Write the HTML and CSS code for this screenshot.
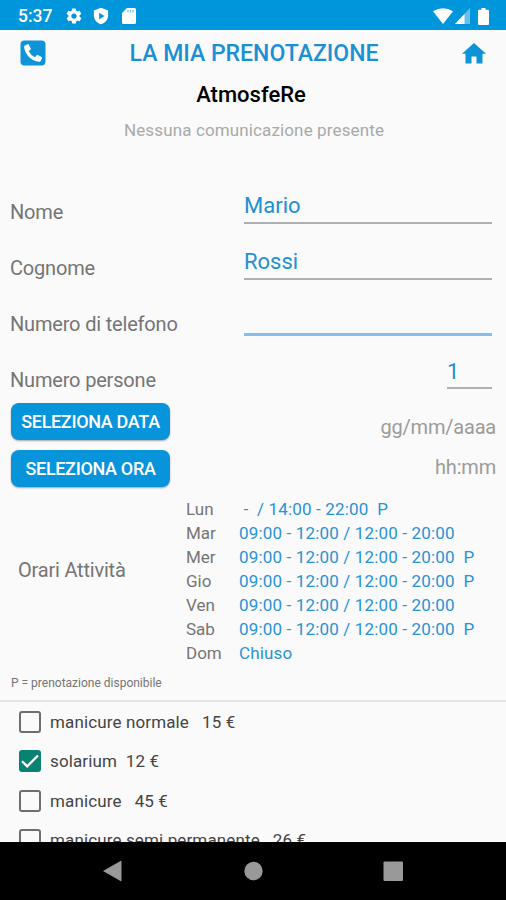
FILE: index.html
```html
<!DOCTYPE html>
<html lang="it">
<head>
    <meta charset="UTF-8">
    <meta name="viewport" content="width=device-width, initial-scale=1.0">
    <title>La mia prenotazione</title>
    <link rel="stylesheet" href="styles.css">
</head>
<body>

<div class="status-bar">
    <span class="clock">5:37</span>
    <svg class="gear" width="18" height="18" viewBox="0 0 24 24"><path fill="#fff" fill-rule="evenodd" d="M19.4 13a7.500 7.500 0 0 0 0-2l2.100-1.600a.5.5 0 0 0 .1-.6l-2-3.500a.5.5 0 0 0-.6-.2l-2.500 1a7.300 7.300 0 0 0-1.700-1l-.4-2.600a.5.5 0 0 0-.5-.5h-4a.5.5 0 0 0-.5.4l-.4 2.700a7.700 7.700 0 0 0-1.700 1l-2.500-1a.5.5 0 0 0-.6.200l-2 3.500a.5.5 0 0 0 .1.600L4.500 11a8 8 0 0 0 0 2l-2.100 1.600a.5.5 0 0 0-.1.600l2 3.500c.1.200.4.300.6.200l2.500-1a7.300 7.300 0 0 0 1.700 1l.4 2.600c0 .3.200.5.500.5h4c.2 0 .5-.2.5-.4l.4-2.700a7.700 7.700 0 0 0 1.700-1l2.500 1c.2.100.5 0 .6-.2l2-3.500a.5.5 0 0 0-.1-.6zM12 15.500a3.500 3.500 0 1 1 0-7 3.500 3.500 0 0 1 0 7z"/></svg>
    <svg class="shield" width="18" height="18" viewBox="0 0 24 24"><path fill="#fff" fill-rule="evenodd" d="M12 1 2.500 4.500V11c0 5.700 4 10.500 9.500 12 5.500-1.500 9.500-6.300 9.500-12V4.500zM9.500 7.500 16.500 12l-7 4.500z"/></svg>
    <svg class="sd-card" width="14" height="16" viewBox="0 0 14 16"><path fill="#fff" d="M5 0h7.500A1.500 1.500 0 0 1 14 1.500v13a1.500 1.500 0 0 1-1.500 1.500h-11A1.500 1.500 0 0 1 0 14.500V5z"/><path stroke="#0096dc" stroke-opacity=".6" stroke-width="1.200" d="M6 2v2.500M8.500 2v2.500M11 2v2.500"/></svg>
    <div class="status-right">
        <svg width="20" height="16" viewBox="0 0 20 16"><path fill="#fff" d="M0 3.200Q10-2.500 20 3.200L10 16z"/></svg>
        <svg class="signal" width="15" height="16" viewBox="0 0 15 16"><path fill="#fff" fill-opacity=".4" d="M15 0v16H0z"/><path fill="#fff" d="M9.500 6v10H0z"/></svg>
        <svg class="battery" width="11" height="17" viewBox="0 0 11 17"><path fill="#fff" d="M3.500 0h4v1.700h2.300q1.200 0 1.200 1.200v12.900q0 1.200-1.200 1.200H1.200Q0 17 0 15.800V2.900q0-1.200 1.200-1.200h2.300z"/></svg>
    </div>
</div>

<div class="header">
    <svg width="26" height="26" viewBox="0 0 26 26"><rect x=".5" y=".5" width="25" height="25" rx="4" fill="#0f93d8"/><path fill="#fff" d="M4.600 5.800 7.500 4.200q.8-.3 1.200.4l2 3.900q.3.700-.3 1.200L8.700 11q1.900 4.300 6.300 6.300l1.500-1.900q.5-.6 1.200-.3l3.900 1.900q.7.400.4 1.200l-1.300 2.900q-.4.700-1.200.6C11 21 5 14.500 4.100 7q-.1-.8.5-1.200z"/></svg>
    <h1 class="title">LA MIA PRENOTAZIONE</h1>
    <svg width="24" height="21" viewBox="0 0 24 21"><path fill="#0f93d8" d="M12 0 24 10.700h-3.500V20.500h-6v-7h-5v7h-6v-9.800H0z"/></svg>
</div>

<h2 class="shop-name">AtmosfeRe</h2>
<p class="notice">Nessuna comunicazione presente</p>

<div class="form">
    <div class="form-group">
        <label for="nome">Nome</label>
        <input type="text" class="input-field" id="nome" value="Mario">
    </div>
    <div class="form-group">
        <label for="cognome">Cognome</label>
        <input type="text" class="input-field" id="cognome" value="Rossi">
    </div>
    <div class="form-group">
        <label for="telefono">Numero di telefono</label>
        <input type="text" class="input-field active" id="telefono">
    </div>
    <div class="form-group last">
        <label for="persone">Numero persone</label>
        <input type="text" class="input-field small" id="persone" value="1">
    </div>
</div>

<div class="pickers">
    <div class="picker">
        <button class="picker-button">SELEZIONA DATA</button>
        <span class="date">gg/mm/aaaa</span>
    </div>
    <div class="picker">
        <button class="picker-button">SELEZIONA ORA</button>
        <span class="time">hh:mm</span>
    </div>
</div>

<div class="hours">
    <div class="hours-label">Orari Attività</div>
    <div class="hours-table">
        <span>Lun</span><span class="slot"> -  / 14:00 - 22:00  P</span>
        <span>Mar</span><span class="slot">09:00 - 12:00 / 12:00 - 20:00</span>
        <span>Mer</span><span class="slot">09:00 - 12:00 / 12:00 - 20:00  P</span>
        <span>Gio</span><span class="slot">09:00 - 12:00 / 12:00 - 20:00  P</span>
        <span>Ven</span><span class="slot">09:00 - 12:00 / 12:00 - 20:00</span>
        <span>Sab</span><span class="slot">09:00 - 12:00 / 12:00 - 20:00  P</span>
        <span>Dom</span><span class="slot">Chiuso</span>
    </div>
</div>
<p class="legend">P = prenotazione disponibile</p>

<div class="services">
    <label class="service"><input type="checkbox" class="check"><span>manicure normale   15 €</span></label>
    <label class="service"><input type="checkbox" class="check" checked><svg class="tick" width="22" height="22" viewBox="0 0 22 22"><path fill="none" stroke="#fff" stroke-width="2.300" d="m3 11.200 5.200 5.100L19 5.500"/></svg><span>solarium  12 €</span></label>
    <label class="service"><input type="checkbox" class="check"><span>manicure   45 €</span></label>
    <label class="service"><input type="checkbox" class="check"><span>manicure semi permanente   26 €</span></label>
</div>

<div class="nav-bar">
    <svg width="506" height="58" viewBox="0 0 506 58">
        <path fill="#999" d="M103 29 120.500 19q1-.5 1 .5v19q0 1-1 .5z"/>
        <circle cx="253.500" cy="29" r="9.200" fill="#999"/>
        <rect x="383.500" y="19.500" width="19.500" height="19.500" rx="1" fill="#999"/>
    </svg>
</div>

</body>
</html>
```
FILE: styles.css
```css
body {
    margin: 0;
    width: 506px;
    height: 900px;
    overflow: hidden;
    display: flex;
    flex-direction: column;
    font-family: Roboto, sans-serif;
    background-color: #fafafa;
    color: #757575;
}
svg {
    display: block;
    flex: none;
}

.status-bar {
    display: flex;
    align-items: center;
    flex: none;
    box-sizing: border-box;
    height: 30px;
    padding: 2px 17px 0 18px;
    background-color: #0096dc;
    color: #fff;
}
.clock {
    width: 47px;
    font-size: 17.500px;
    font-weight: 500;
}
.shield {
    margin-left: 9px;
}
.sd-card {
    margin-left: 12px;
}
.status-right {
    display: flex;
    align-items: center;
    margin-left: auto;
}
.signal {
    margin-left: 2px;
}
.battery {
    margin-left: 8px;
}

.header {
    display: flex;
    align-items: center;
    justify-content: space-between;
    flex: none;
    height: 46px;
    padding: 0 20px;
}
.title {
    margin: 0;
    font-size: 23px;
    font-weight: 500;
    color: #1a90d5;
}
.shop-name {
    margin: 4px 4px 0 0;
    text-align: center;
    font-size: 22px;
    line-height: 29px;
    font-weight: 500;
    color: #000;
}
.notice {
    margin: 9px 0 0;
    padding-left: 2px;
    text-align: center;
    font-size: 17px;
    letter-spacing: 0.13px;
    line-height: 24px;
    color: #a9a9a9;
}

.form {
    margin-top: 42px;
    padding: 0 14px 0 10px;
}
.form-group {
    display: flex;
    justify-content: space-between;
    height: 56px;
}
.form-group label {
    font-size: 20px;
    letter-spacing: -0.18px;
    line-height: 57px;
}
.form-group.last {
    height: 51px;
}
.input-field {
    box-sizing: border-box;
    width: 248px;
    height: 40px;
    padding: 5px 0 0;
    border: none;
    border-bottom: 2px solid #b0b0b0;
    background: none;
    outline: none;
    font-family: Roboto, sans-serif;
    font-size: 22px;
    color: #2390d2;
}
.input-field.active {
    border-bottom: 3px solid #86bfec;
}
.input-field.small {
    width: 45px;
    height: 37px;
    padding-top: 3px;
}

.pickers {
    display: flex;
    flex-direction: column;
    gap: 10px;
    padding: 0 10px 0 11px;
}
.picker {
    display: flex;
    justify-content: space-between;
    height: 37px;
}
.picker-button {
    width: 159px;
    padding: 0;
    border: none;
    border-radius: 8px;
    background-color: #0894da;
    box-shadow: 0 1px 2px rgba(0, 0, 0, 0.35);
    font-family: Roboto, sans-serif;
    font-size: 18px;
    font-weight: 500;
    letter-spacing: -0.33px;
    color: #fff;
}
.date, .time {
    font-size: 20px;
    letter-spacing: -0.2px;
    line-height: 48px;
    color: #9c9c9c;
}
.time {
    line-height: 34px;
}

.hours {
    display: flex;
    align-items: center;
    height: 168px;
    margin-top: 10px;
    padding-left: 18px;
}
.hours-label {
    width: 168px;
    padding-bottom: 22px;
    font-size: 20px;
    letter-spacing: -0.2px;
}
.hours-table {
    display: grid;
    grid-template-columns: 53px auto;
    font-size: 17px;
    line-height: 24px;
}
.slot {
    white-space: pre;
    letter-spacing: 0.16px;
    color: #2a93d4;
}
.legend {
    margin: 9px 0 0 11px;
    font-size: 12px;
    line-height: 18px;
}

.services {
    flex: 1;
    min-height: 0;
    overflow: hidden;
    margin-top: 8px;
    border-top: 2px solid #e4e4e4;
}
.service {
    display: flex;
    align-items: center;
    position: relative;
    height: 39.500px;
    padding-left: 19px;
    font-size: 17px;
    letter-spacing: 0.13px;
    white-space: pre;
    color: #444;
}
.check {
    appearance: none;
    box-sizing: border-box;
    width: 22px;
    height: 22px;
    margin: 0 9px 0 0;
    border: 2px solid #6e6e6e;
    border-radius: 3px;
}
.check:checked {
    border-color: #0a8272;
    background-color: #0a8272;
}
/* tick sits on top of the checkbox */
.tick {
    position: absolute;
    left: 19px;
}
.nav-bar {
    flex: none;
    height: 58px;
    background-color: #000;
}
```
